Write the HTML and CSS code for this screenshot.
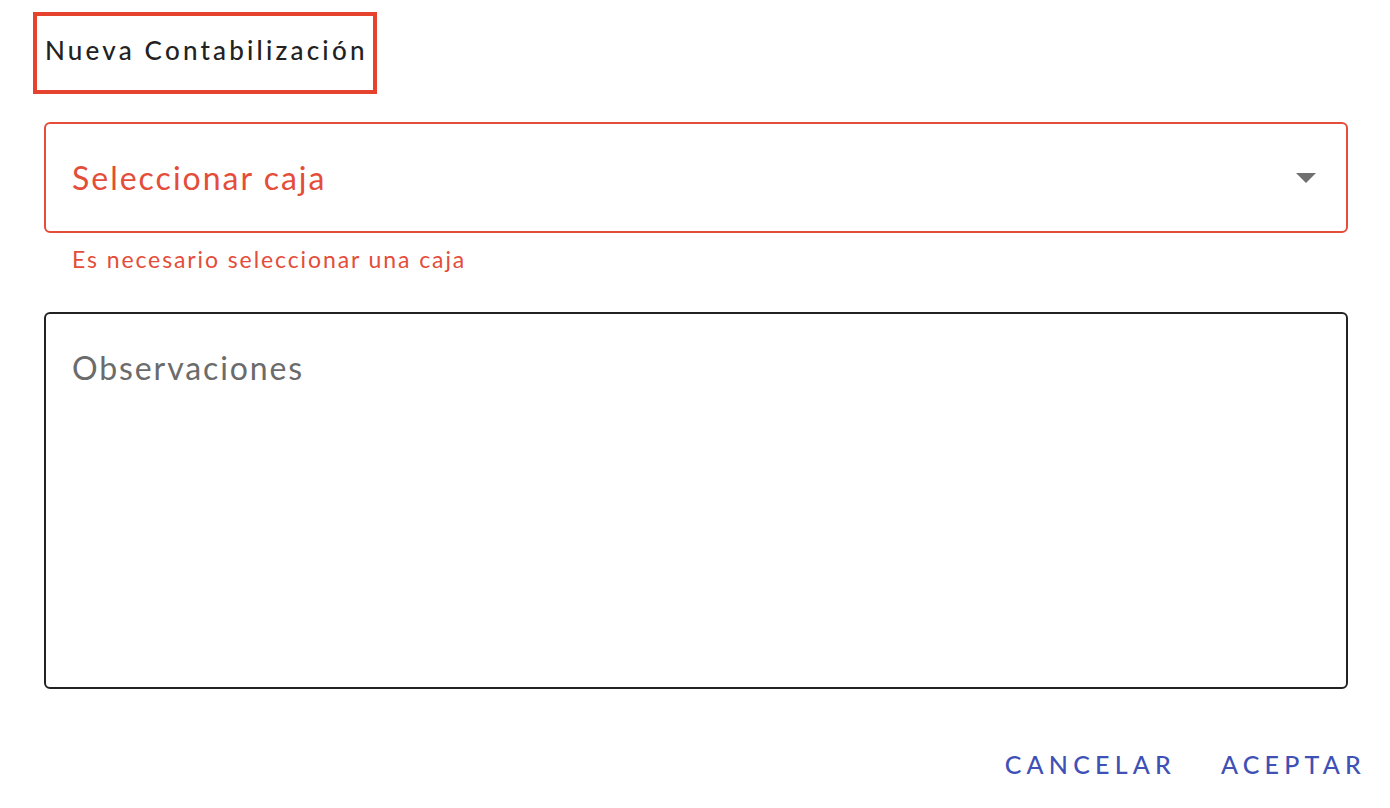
FILE: index.html
```html
<!DOCTYPE html>
<html lang="es">
<head>
<meta charset="utf-8">
<title>Nueva Contabilización</title>
<link rel="stylesheet" href="styles.css">
</head>
<body>
<div class="dialog">
  <div class="title-box"><h1 class="title">Nueva Contabilización</h1></div>
  <div class="content">
    <div class="field">
      <div class="select">
        <span class="select-label">Seleccionar caja</span>
        <svg class="arrow" width="20" height="10" viewBox="0 0 20 10"><path d="M0 0 L20 0 L10 10 Z" fill="#707070"/></svg>
      </div>
      <div class="error">Es necesario seleccionar una caja</div>
    </div>
    <div class="textarea">
      <span class="placeholder">Observaciones</span>
    </div>
  </div>
  <div class="actions">
    <button class="btn">CANCELAR</button>
    <button class="btn">ACEPTAR</button>
  </div>
</div>
</body>
</html>
```
FILE: styles.css
```css
html, body {
  margin: 0;
  padding: 0;
  background: #fff;
}
body {
  font-family: Lato, "Open Sans", sans-serif;
  width: 1390px;
  height: 808px;
  overflow: hidden;
}
.dialog {
  padding: 12px 0 0 33px;
}
.title-box {
  width: 344px;
  height: 82px;
  box-sizing: border-box;
  border: 4px solid #e5432d;
  display: flex;
  align-items: center;
  padding: 0 0 6px 8px;
}
.title {
  margin: 0;
  font-size: 26px;
  font-weight: 500;
  letter-spacing: 3.2px;
  color: #222;
  white-space: nowrap;
}
.content {
  margin-left: 11px;
  width: 1304px;
  padding-top: 28px;
}
.select {
  height: 111px;
  box-sizing: border-box;
  border: 2px solid #e34d3a;
  border-radius: 6px;
  display: flex;
  align-items: center;
  justify-content: space-between;
  padding: 0 30px 0 26px;
}
.select-label {
  font-size: 32px;
  letter-spacing: 2px;
  color: #e34d3a;
}
.arrow { display: block; margin-top: 1px; }
.error {
  padding: 11px 0 0 28px;
  font-size: 23px;
  letter-spacing: 1.9px;
  color: #e34d3a;
  height: 46px;
  line-height: 30px;
}
.textarea {
  margin-top: 22px;
  height: 377px;
  box-sizing: border-box;
  border: 2px solid #222;
  border-radius: 6px;
  padding: 34px 26px;
}
.placeholder {
  font-size: 32px;
  letter-spacing: 1.9px;
  color: #6b6b6b;
}
.actions {
  display: flex;
  justify-content: flex-end;
  gap: 45px;
  padding: 60px 24px 0 0;
}
.btn {
  background: none;
  border: none;
  padding: 0;
  font-family: inherit;
  font-size: 25px;
  letter-spacing: 5.2px;
  color: #3f51b5;
  font-weight: 500;
}
```
